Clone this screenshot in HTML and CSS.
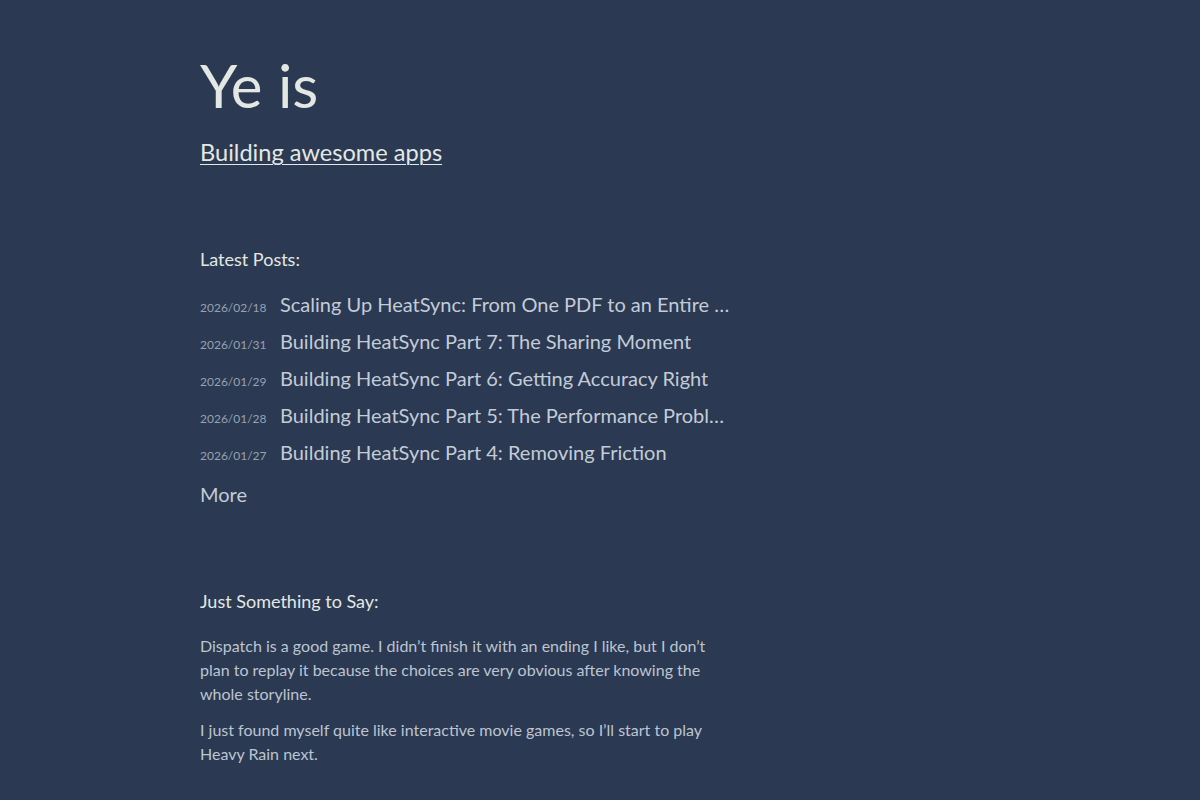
FILE: index.html
```html
<!DOCTYPE html>
<html lang="en">
<head>
  <meta charset="UTF-8" />
  <title>Ye is</title>
  <link rel="stylesheet" href="styles.css">
</head>
<body>
  <div class="content">
    <header class="intro">
      <h1>Ye is</h1>
      <a class="tagline" href="#">Building awesome apps</a>
    </header>

    <section class="posts">
      <h3>Latest Posts:</h3>
      <ul class="post-list">
        <li><span class="date">2026/02/18</span><a href="#">Scaling Up HeatSync: From One PDF to an Entire Library</a></li>
        <li><span class="date">2026/01/31</span><a href="#">Building HeatSync Part 7: The Sharing Moment</a></li>
        <li><span class="date">2026/01/29</span><a href="#">Building HeatSync Part 6: Getting Accuracy Right</a></li>
        <li><span class="date">2026/01/28</span><a href="#">Building HeatSync Part 5: The Performance Problem</a></li>
        <li><span class="date">2026/01/27</span><a href="#">Building HeatSync Part 4: Removing Friction</a></li>
      </ul>
      <a class="more" href="#">More</a>
    </section>

    <section class="say">
      <h3>Just Something to Say:</h3>
      <p>Dispatch is a good game. I didn’t finish it with an ending I like, but I don’t plan to replay it because the choices are very obvious after knowing the whole storyline.</p>
      <p>I just found myself quite like interactive movie games, so I’ll start to play Heavy Rain next.</p>
    </section>
  </div>
</body>
</html>
```

FILE: styles.css
```css
body {
  margin: 0;
  background-color: #2b3953;
  color: #c3ccd6;
  font-family: "Source Sans Pro", Lato, sans-serif;
}
a {
  color: inherit;
  text-decoration: none;
}
.content {
  width: 530px;
  margin-left: 200px;
  padding-top: 47px;
}
.intro h1 {
  font-family: Lato, sans-serif;
  font-weight: 400;
  font-size: 60px;
  line-height: 76px;
  margin: 0;
  color: #e3e8e3;
}
.tagline {
  display: inline-block;
  margin-top: 15px;
  font-family: Lato, sans-serif;
  font-size: 23.6px;
  color: #e3e8e3;
  text-decoration: underline;
  text-underline-offset: 3px;
  text-decoration-thickness: 1px;
}
h3 {
  font-family: Lato, sans-serif;
  font-weight: 400;
  font-size: 18px;
  color: #e3e8e3;
  margin: 0 0 16px;
}
.posts {
  margin-top: 82px;
}
.post-list {
  list-style: none;
  margin: 0;
  padding: 0;
}
.post-list li {
  display: flex;
  align-items: baseline;
  height: 37px;
  line-height: 37px;
}
.date {
  flex: none;
  width: 80px;
  font-size: 12px;
  color: #97a2b0;
}
.post-list a {
  font-size: 20px;
  color: #c3ccd6;
  white-space: nowrap;
  overflow: hidden;
  text-overflow: ellipsis;
}
.more {
  display: inline-block;
  margin-top: 11px;
  font-size: 20px;
}
.say {
  margin-top: 84px;
}
.say h3 {
  margin-bottom: 22px;
}
.say p {
  font-size: 16px;
  line-height: 24px;
  margin: 0 0 12px;
  color: #bcc5cf;
}
```
